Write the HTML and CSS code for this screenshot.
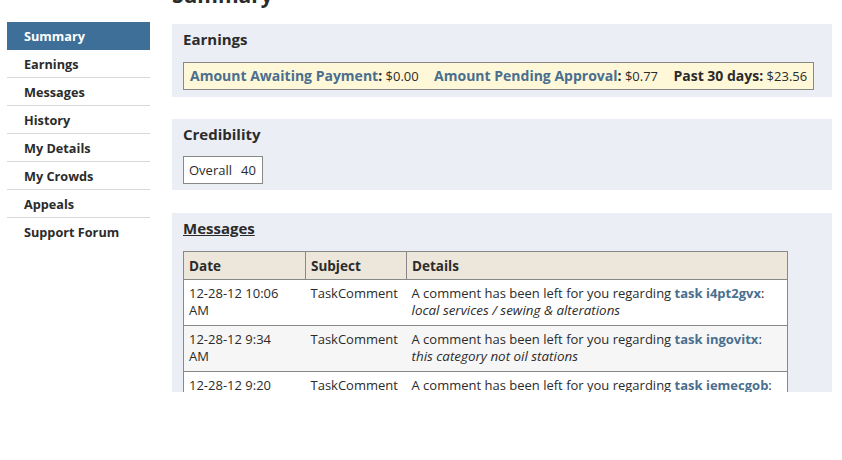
FILE: index.html
```html
<!DOCTYPE html>
<html>
<head>
<meta charset="utf-8">
<link rel="stylesheet" href="styles.css">
</head>
<body>
<div class="page">
  <nav class="sidebar">
    <a class="nav-item active">Summary</a>
    <a class="nav-item">Earnings</a>
    <a class="nav-item">Messages</a>
    <a class="nav-item">History</a>
    <a class="nav-item">My Details</a>
    <a class="nav-item">My Crowds</a>
    <a class="nav-item">Appeals</a>
    <a class="nav-item last">Support Forum</a>
  </nav>
  <main class="main">
    <h1 class="page-title">Summary</h1>
    <section class="panel earnings">
      <h2 class="panel-title">Earnings</h2>
      <div class="earn-box">
        <span class="lbl">Amount Awaiting Payment</span><b class="colon">:</b> $0.00
        <span class="lbl gap">Amount Pending Approval</span><b class="colon">:</b> $0.77
        <b class="lbl gap dark">Past 30 days:</b> $23.56
      </div>
    </section>
    <section class="panel cred">
      <h2 class="panel-title">Credibility</h2>
      <div class="cred-box"><span>Overall</span><span class="cred-val">40</span></div>
    </section>
    <section class="panel messages">
      <h2 class="panel-title"><u>Messages</u></h2>
      <table class="msg-table">
        <thead>
          <tr><th class="c-date">Date</th><th class="c-subj">Subject</th><th>Details</th></tr>
        </thead>
        <tbody>
          <tr><td class="d-date">12-28-12 10:06 AM</td><td>TaskComment</td><td>A comment has been left for you regarding <a class="task">task i4pt2gvx</a>:<br><i>local services / sewing &amp; alterations</i></td></tr>
          <tr class="alt"><td class="d-date">12-28-12 9:34 AM</td><td>TaskComment</td><td>A comment has been left for you regarding <a class="task">task ingovitx</a>:<br><i>this category not oil stations</i></td></tr>
          <tr><td class="d-date">12-28-12 9:20 AM</td><td>TaskComment</td><td>A comment has been left for you regarding <a class="task">task iemecgob</a>:<br><i>local services</i></td></tr>
        </tbody>
      </table>
    </section>
  </main>
</div>
</body>
</html>
```

FILE: styles.css
```css
* { box-sizing: border-box; }
html, body { margin: 0; padding: 0; background: #fff; }
body {
  font-family: "Open Sans", "Noto Sans", "DejaVu Sans", sans-serif;
  font-size: 13px;
  color: #2b2b2b;
  overflow: hidden;
  height: 460px;
}
.page {
  display: flex;
  align-items: flex-start;
}
.sidebar {
  width: 143px;
  margin: 22px 0 0 7px;
  display: flex;
  flex-direction: column;
}
.nav-item {
  display: block;
  height: 28px;
  line-height: 28px;
  padding-left: 17px;
  font-weight: bold;
  font-size: 12.7px;
  color: #2b2b2b;
  border-bottom: 1px solid #d8d8d8;
}
.nav-item.active {
  background: #3d6f99;
  color: #fff;
  border-bottom-color: #3d6f99;
}
.nav-item.last { border-bottom: none; }
.main {
  width: 660px;
  margin-left: 22px;
}
.page-title {
  font-size: 21px;
  font-weight: bold;
  margin: -19px 0 15px 0;
  line-height: 28px;
  color: #2b2b2b;
}
.panel {
  background: #eceef5;
  padding: 6px 11px 7px 11px;
  margin-bottom: 22px;
}
.panel-title {
  font-size: 15px;
  font-weight: bold;
  margin: 0 0 14px 0;
  line-height: 18px;
  color: #2b2b2b;
}
.earn-box {
  display: inline-block;
  background: #fff8d8;
  border: 1px solid #888;
  height: 28px;
  line-height: 26px;
  padding: 0 6px;
  white-space: nowrap;
  font-size: 13px;
}
.lbl { font-weight: bold; color: #4a6f8e; font-size: 14px; }
.colon { font-size: 14px; }
.gap { margin-left: 12px; }
.dark { color: #2b2b2b; }
.cred { padding-bottom: 6px; margin-bottom: 23px; }
.cred .panel-title { margin-bottom: 13px; }
.cred-box {
  display: inline-block;
  background: #fff;
  border: 1px solid #888;
  height: 28px;
  line-height: 26px;
  padding: 0 6px 0 5px;
}
.cred-val { margin-left: 9px; }
.messages {
  height: 179px;
  overflow: hidden;
  padding-right: 44px;
}
.messages .panel-title { margin-bottom: 14px; }
.msg-table {
  width: 605px;
  border-collapse: collapse;
  background: #fff;
}
.msg-table th {
  background: #ede6da;
  text-align: left;
  font-weight: bold;
  font-size: 13.5px;
  height: 28px;
  padding: 0 5px;
  border: 1px solid #888;
}
.c-date { width: 122px; }
.c-subj { width: 101px; }
.msg-table td {
  vertical-align: top;
  padding: 5px 5px 6px 5px;
  line-height: 17px;
  border: 1px solid #888;
  border-left: none;
  border-right: none;
}
.msg-table td.d-date { padding-right: 24px; }
.msg-table td:first-child { border-left: 1px solid #888; }
.msg-table td:last-child { border-right: 1px solid #888; }
.msg-table tr.alt td { background: #f6f6f6; }
.msg-table i { font-size: 13.4px; }
.task { font-weight: bold; color: #4a6f8e; }
```
